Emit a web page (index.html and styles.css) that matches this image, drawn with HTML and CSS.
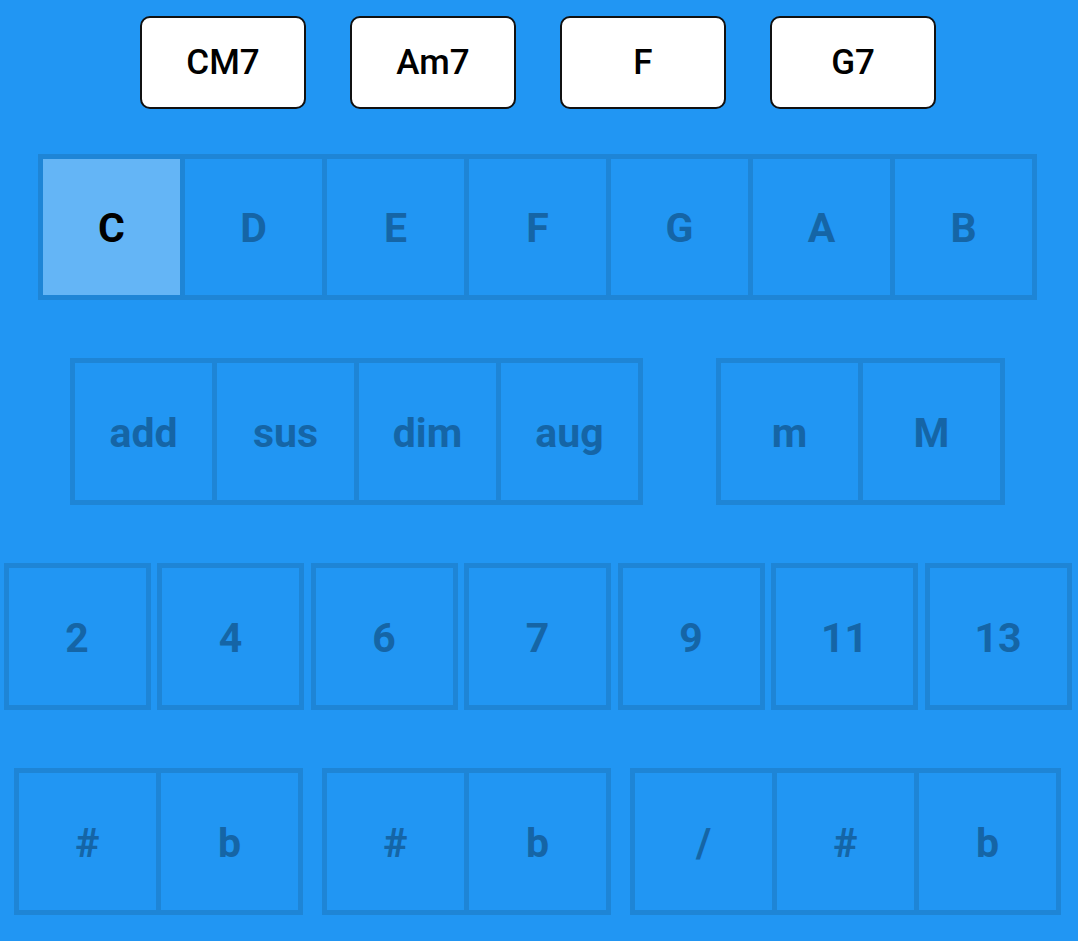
FILE: index.html
```html
<!DOCTYPE html>
<html>
<head>
<meta charset="utf-8">
<link rel="stylesheet" href="styles.css">
</head>
<body>
<div class="app">
  <div class="chords">
    <div class="chord">CM7</div>
    <div class="chord">Am7</div>
    <div class="chord">F</div>
    <div class="chord">G7</div>
  </div>

  <div class="row row-notes">
    <div class="group">
      <div class="cell selected">C</div>
      <div class="cell">D</div>
      <div class="cell">E</div>
      <div class="cell">F</div>
      <div class="cell">G</div>
      <div class="cell">A</div>
      <div class="cell">B</div>
    </div>
  </div>

  <div class="row row-quality">
    <div class="group">
      <div class="cell">add</div>
      <div class="cell">sus</div>
      <div class="cell">dim</div>
      <div class="cell">aug</div>
    </div>
    <div class="group">
      <div class="cell">m</div>
      <div class="cell">M</div>
    </div>
  </div>

  <div class="row row-ext">
    <div class="group"><div class="cell">2</div></div>
    <div class="group"><div class="cell">4</div></div>
    <div class="group"><div class="cell">6</div></div>
    <div class="group"><div class="cell">7</div></div>
    <div class="group"><div class="cell">9</div></div>
    <div class="group"><div class="cell">11</div></div>
    <div class="group"><div class="cell">13</div></div>
  </div>

  <div class="row row-acc">
    <div class="group">
      <div class="cell">#</div>
      <div class="cell">b</div>
    </div>
    <div class="group">
      <div class="cell">#</div>
      <div class="cell">b</div>
    </div>
    <div class="group">
      <div class="cell">/</div>
      <div class="cell">#</div>
      <div class="cell">b</div>
    </div>
  </div>
</div>
</body>
</html>
```

FILE: styles.css
```css
html, body {
  margin: 0;
  padding: 0;
  background: #2196F3;
}

body {
  font-family: Roboto, "Liberation Sans", sans-serif;
  width: 1078px;
  height: 941px;
  overflow: hidden;
}

.app {
  width: 1075px;
  display: flex;
  flex-direction: column;
  align-items: center;
  padding-top: 16px;
}

.chords {
  display: flex;
  gap: 44px;
  height: 92px;
  padding-left: 1px;
}

.chord {
  box-sizing: border-box;
  width: 166px;
  height: 93px;
  background: #fff;
  border: 2px solid #111;
  border-radius: 10px;
  display: flex;
  align-items: center;
  justify-content: center;
  font-size: 35px;
  font-weight: 500;
  color: #000;
}

.row {
  display: flex;
  justify-content: center;
  margin-top: 58px;
  height: 147px;
}

.row-notes {
  margin-top: 46px;
  height: 146px;
}

.row-quality { gap: 73px; }
.row-ext { gap: 6.5px; }
.row-acc { gap: 19px; }

.group {
  display: flex;
}

.cell {
  box-sizing: border-box;
  width: 147px;
  height: 147px;
  border: 5px solid #1E85D6;
  display: flex;
  align-items: center;
  justify-content: center;
  padding-top: 2px;
  font-weight: 700;
  font-size: 41px;
  color: #1565A6;
}

.row-notes .cell { height: 146px; }

.cell + .cell {
  margin-left: -5px;
}

.cell.selected {
  background: #64B5F6;
  color: #000;
}
```
